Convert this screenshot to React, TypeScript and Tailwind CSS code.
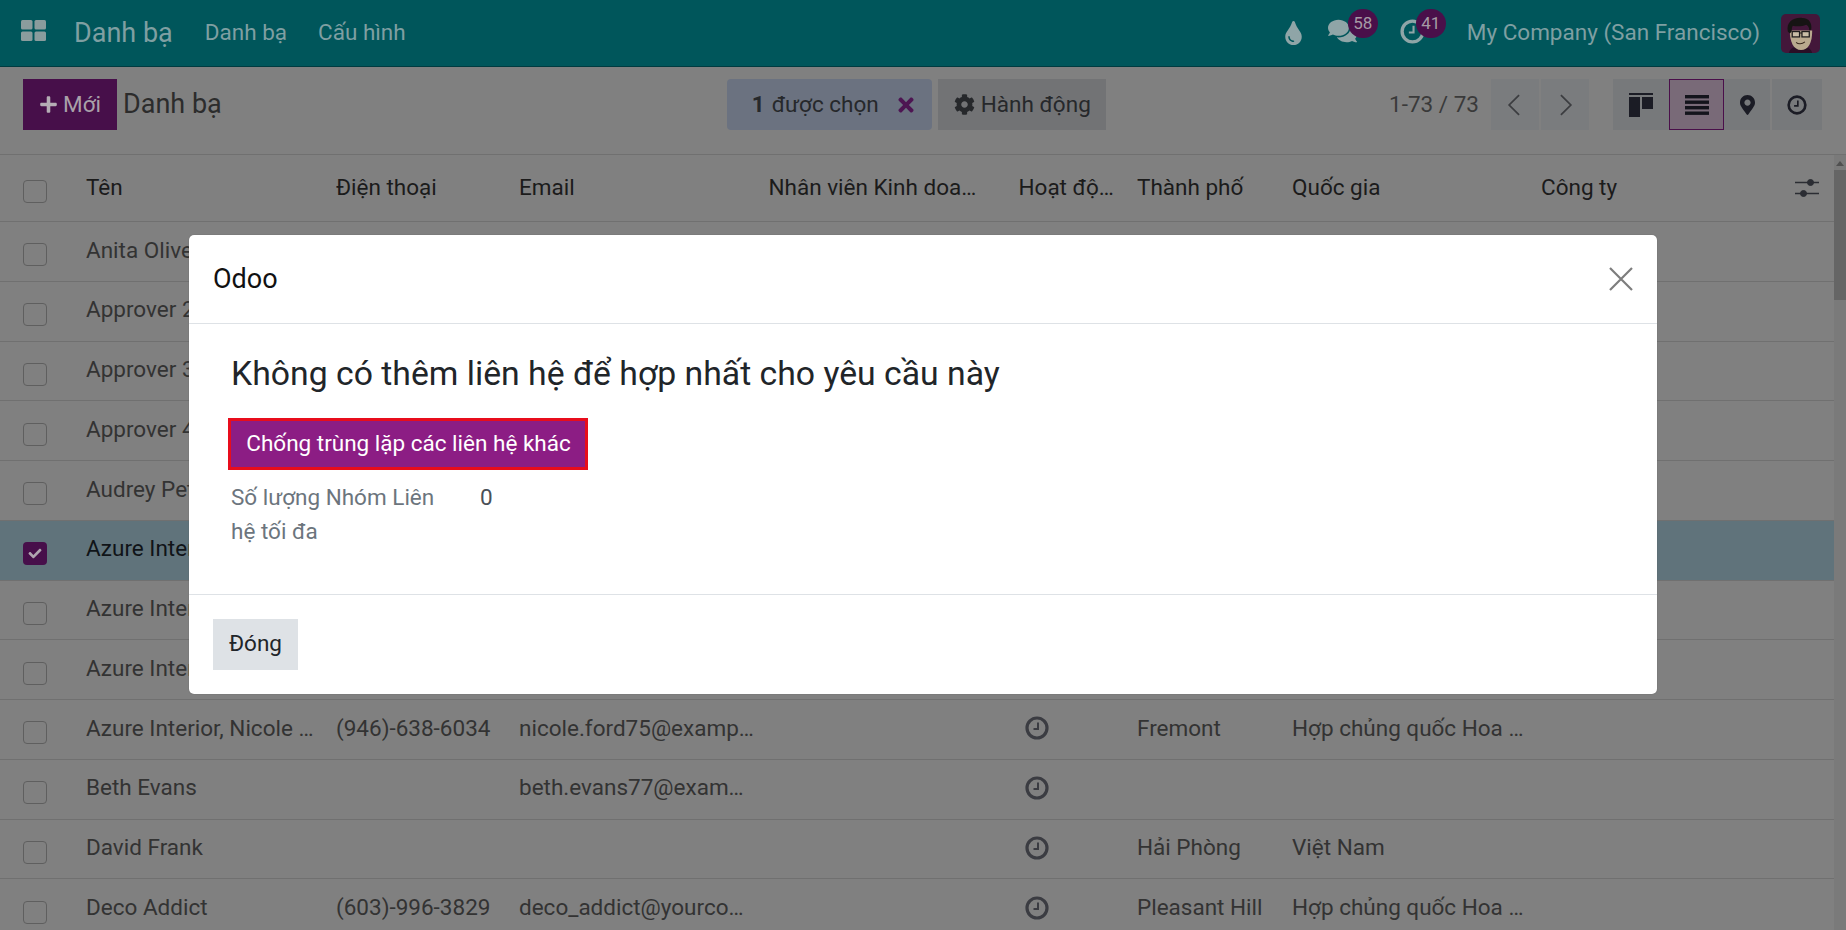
import { FaComments, FaCog, FaMapMarkerAlt, FaPlus, FaTimes, FaTint, FaCheck } from "react-icons/fa";

const gridCols =
  "grid grid-cols-[86px_250px_183px_249.5px_250px_118.5px_155px_249px_1fr]";

type Contact = {
  name: string;
  phone?: string;
  email?: string;
  city?: string;
  country?: string;
  selected?: boolean;
};

const contacts: Contact[] = [
  { name: "Anita Oliver" },
  { name: "Approver 2" },
  { name: "Approver 3" },
  { name: "Approver 4" },
  { name: "Audrey Peterson" },
  { name: "Azure Interior", selected: true },
  { name: "Azure Interior, Brandon Freeman" },
  { name: "Azure Interior, Colleen Diaz" },
  {
    name: "Azure Interior, Nicole Ford",
    phone: "(946)-638-6034",
    email: "nicole.ford75@example.com",
    city: "Fremont",
    country: "Hợp chủng quốc Hoa Kỳ",
  },
  { name: "Beth Evans", email: "beth.evans77@example.com" },
  { name: "David Frank", city: "Hải Phòng", country: "Việt Nam" },
  {
    name: "Deco Addict",
    phone: "(603)-996-3829",
    email: "deco_addict@yourcompany.example.com",
    city: "Pleasant Hill",
    country: "Hợp chủng quốc Hoa Kỳ",
  },
];

function ClockIcon({ className }: { className?: string }) {
  return (
    <svg viewBox="0 0 24 24" className={className} fill="none" stroke="currentColor">
      <circle cx="12" cy="12" r="10" strokeWidth="3.2" />
      <path d="M13 6.5V13H8.5" strokeWidth="2" />
    </svg>
  );
}

function Avatar() {
  return (
    <svg viewBox="0 0 40 40" className="h-[39px] w-[39px] rounded-[5px]">
      <rect width="40" height="40" fill="#43173a" />
      <path d="M8 40c1-5 6-7 12-7s11 2 12 7z" fill="#2a0f26" />
      <path d="M9 17c0 12 4 20 11.5 20S32 30 32 17z" fill="#b9a98e" />
      <path d="M7 18C5 8 13 3 22 4c7 .5 10 5 9 12l-2 1c0-3-1-5-3-6-5 2-10 2-14 1-1 2-1 4-1 6l-2 2z" fill="#161414" />
      <rect x="11.5" y="18" width="7.5" height="5.5" fill="#c9bda6" stroke="#1f1c1c" strokeWidth="1.3" />
      <rect x="21.5" y="18" width="7.5" height="5.5" fill="#c9bda6" stroke="#1f1c1c" strokeWidth="1.3" />
      <path d="M19 19.5h2.5" stroke="#1f1c1c" strokeWidth="1.2" />
      <path d="M15.5 29c2 2 6 2 9-.5" fill="none" stroke="#3a2a20" strokeWidth="1.1" />
    </svg>
  );
}

function Badge({ value, left }: { value: number; left: string }) {
  return (
    <span
      className={`absolute top-[9px] flex h-[29px] w-[30px] items-center justify-center rounded-full bg-[#4a0f4a] text-[17px] leading-none text-[#a59ba5] ${left}`}
    >
      {value}
    </span>
  );
}

function NavBar() {
  return (
    <header className="flex h-[67px] shrink-0 items-center border-b border-[#003b40] bg-[#00565b] text-[22.5px] text-[#7f9fa2]">
      <svg viewBox="0 0 25 21" className="ml-[21px] h-[21px] w-[25px] -translate-y-[3px]" fill="#8a9c9d">
        <rect x="0" y="0" width="11.5" height="9.5" rx="1.5" />
        <rect x="13.5" y="0" width="11.5" height="9.5" rx="1.5" />
        <rect x="0" y="11.5" width="11.5" height="9.5" rx="1.5" />
        <rect x="13.5" y="11.5" width="11.5" height="9.5" rx="1.5" />
      </svg>
      <span className="ml-[28px] text-[27px]">Danh bạ</span>
      <span className="ml-[32px]">Danh bạ</span>
      <span className="ml-[31px]">Cấu hình</span>

      <FaTint className="ml-auto h-[24px] w-[17px] text-[#8fa5a7]" />
      <div className="relative ml-[26px] h-[67px] w-[50px]">
        <FaComments className="absolute left-0 top-[18px] h-[26px] w-[29px] text-[#8fa5a7]" />
        <Badge value={58} left="left-[20px]" />
      </div>
      <div className="relative ml-[22px] h-[67px] w-[46px]">
        <ClockIcon className="absolute left-0 top-[19px] h-[25px] w-[25px] text-[#8fa5a7]" />
        <Badge value={41} left="left-[16px]" />
      </div>
      <span className="ml-[21px]">My Company (San Francisco)</span>
      <div className="ml-[21px] mr-[26px]">
        <Avatar />
      </div>
    </header>
  );
}

function ControlPanel() {
  return (
    <div className="flex h-[88px] shrink-0 items-start border-b border-[#707070] bg-[#808080] pt-[12px] text-[22.5px]">
      <button className="ml-[23px] flex h-[51px] w-[94px] items-center justify-center gap-[5px] bg-[#470f4a] text-[#a9a0a9]">
        <FaPlus className="h-[19px] w-[19px] text-[#b5adb5]" />
        Mới
      </button>
      <span className="ml-[6px] flex h-[51px] items-center text-[27px] text-[#2c2c2c]">Danh bạ</span>

      <div className="ml-[505px] flex h-[51px] w-[205px] items-center rounded-[4px] bg-[#6b7280] pl-[25px] text-[#26282b]">
        <b className="font-bold">1</b>
        <span className="ml-[7px]">được chọn</span>
        <FaTimes className="ml-[17px] h-[22px] w-[20px] text-[#4d1552]" />
      </div>
      <button className="ml-[6px] flex h-[51px] w-[168px] items-center bg-[#727375] pl-[16px] text-[#26282b]">
        <FaCog className="h-[21px] w-[21px]" />
        <span className="ml-[6px]">Hành động</span>
      </button>

      <span className="ml-auto flex h-[51px] items-center text-[#3a3a3a]">1-73 / 73</span>
      <div className="ml-[12px] flex gap-[2px]">
        <PagerButton d="M15.5 3.5 7 12l8.5 8.5" />
        <PagerButton d="M8.5 3.5 17 12l-8.5 8.5" />
      </div>

      <div className="ml-[24px] mr-[24px] flex">
        <button className="flex h-[51px] w-[56px] items-center justify-center bg-[#77797b]">
          <svg viewBox="0 0 24 24" className="h-[24px] w-[24px]" fill="#1b1c25">
            <rect x="0" y="0" width="24" height="2" />
            <rect x="0" y="4" width="11" height="20" />
            <rect x="13" y="4" width="11" height="12" />
          </svg>
        </button>
        <button className="flex h-[51px] w-[55px] items-center justify-center border border-[#4a0f4a] bg-[#796a78]">
          <svg viewBox="0 0 24 20" className="h-[20px] w-[24px]" fill="#14141c">
            <rect y="0" width="24" height="3.4" />
            <rect y="5.5" width="24" height="3.4" />
            <rect y="11" width="24" height="3.4" />
            <rect y="16.5" width="24" height="3.4" />
          </svg>
        </button>
        <button className="flex h-[51px] w-[46px] items-center justify-center bg-[#77797b]">
          <FaMapMarkerAlt className="h-[20px] w-[15px] text-[#1b1c25]" />
        </button>
        <button className="ml-[2px] flex h-[51px] w-[50px] items-center justify-center bg-[#77797b]">
          <ClockIcon className="h-[20px] w-[20px] text-[#1b1c25]" />
        </button>
      </div>
    </div>
  );
}

function PagerButton({ d }: { d: string }) {
  return (
    <button className="flex h-[51px] w-[48px] items-center justify-center bg-[#7a7c7e]">
      <svg viewBox="0 0 24 24" className="h-[28px] w-[28px]" fill="none" stroke="#3c3d40" strokeWidth="1.5">
        <path d={d} />
      </svg>
    </button>
  );
}

function Checkbox({ checked }: { checked?: boolean }) {
  return (
    <span
      className={
        checked
          ? "ml-[23px] mt-[7px] flex h-[23px] w-[24px] items-center justify-center rounded-[4px] bg-[#470f4a]"
          : "ml-[23px] mt-[7px] block h-[23px] w-[24px] rounded-[4px] border border-[#5f5f5f]"
      }
    >
      {checked && <FaCheck className="h-[13px] w-[14px] text-[#b0a5b0]" />}
    </span>
  );
}

function ContactTable() {
  return (
    <div className="flex min-h-0 flex-1 bg-[#808080]">
      <div className="w-[1834px] shrink-0">
        <div className={`${gridCols} h-[67px] items-center border-b border-[#707070] text-[22.5px] text-[#1b1b1b]`}>
          <Checkbox />
          <div className="truncate pr-6">Tên</div>
          <div className="truncate pr-6">Điện thoại</div>
          <div className="truncate pr-6">Email</div>
          <div className="truncate pr-[38px]">Nhân viên Kinh doanh</div>
          <div className="truncate pr-[20px]">Hoạt động</div>
          <div className="truncate pr-6">Thành phố</div>
          <div className="truncate pr-6">Quốc gia</div>
          <div className="flex items-center justify-between pr-[15px]">
            Công ty
            <svg viewBox="0 0 24 18" className="h-[18px] w-[24px]" stroke="#2b2d33" fill="#2b2d33">
              <path d="M0 3.5h24M0 14.5h24" strokeWidth="1.4" />
              <circle cx="15.5" cy="3.5" r="3" />
              <circle cx="8.5" cy="14.5" r="3" />
            </svg>
          </div>
        </div>
        {contacts.map((c, i) => (
          <div
            key={i}
            className={`${gridCols} h-[59.75px] items-center border-b border-[#707070] text-[22.5px] ${
              c.selected ? "bg-[#60737b] text-[#101418]" : "text-[#333333]"
            }`}
          >
            <Checkbox checked={c.selected} />
            <div className="truncate pb-[2px] pr-[14px]">{c.name}</div>
            <div className="truncate pb-[2px] pr-4">{c.phone}</div>
            <div className="truncate pb-[2px] pr-[14px]">{c.email}</div>
            <div />
            <div className="pb-[2px] pl-[6px]">
              <ClockIcon className="h-[24px] w-[24px] text-[#3b3c42]" />
            </div>
            <div className="truncate pb-[2px]">{c.city}</div>
            <div className="truncate pb-[2px] pr-4">{c.country}</div>
            <div />
          </div>
        ))}
      </div>
      <div className="flex w-[12px] flex-col items-center bg-[#7a7a7a]">
        <span className="mt-[6px] h-0 w-0 border-x-[4px] border-b-[5px] border-x-transparent border-b-[#505050]" />
        <span className="mt-[4px] h-[130px] w-full bg-[#656565]" />
      </div>
    </div>
  );
}

function MergeDialog() {
  return (
    <div className="absolute inset-0 flex justify-center pt-[235px]">
      <div className="flex h-[459px] w-[1468px] flex-col rounded-[5px] bg-white text-[22.5px] shadow-[0_0_1px_#555]">
        <div className="flex h-[89px] items-center justify-between border-b border-[#dee2e6] pl-[24px] pr-[24px]">
          <span className="text-[27px] text-[#111]">Odoo</span>
          <svg viewBox="0 0 24 24" className="h-[24px] w-[24px]" stroke="#7d7d7d" strokeWidth="2.2">
            <path d="M1 1l22 22M23 1 1 23" />
          </svg>
        </div>
        <div className="flex-1 pl-[39px] pt-[28px]">
          <h1 className="pl-[3px] text-[33.75px] leading-[44px] text-[#212529]">
            Không có thêm liên hệ để hợp nhất cho yêu cầu này
          </h1>
          <button className="mt-[22px] h-[52px] w-[360px] border-[3px] border-[#e80d1c] bg-[#8c1d84] pl-[1px] text-center text-white">
            Chống trùng lặp các liên hệ khác
          </button>
          <div className="mt-[10px] flex pl-[3px] leading-[34px]">
            <div className="w-[249px] text-[#6c757d]">
              Số lượng Nhóm Liên
              <br />
              hệ tối đa
            </div>
            <div className="text-[#495057]">0</div>
          </div>
        </div>
        <div className="flex h-[100px] items-start border-t border-[#dee2e6] pl-[24px] pt-[24px]">
          <button className="h-[51px] w-[85px] bg-[#dee2e6] pb-[1px] text-[#212529]">Đóng</button>
        </div>
      </div>
    </div>
  );
}

export default function App() {
  return (
    <div className="relative flex h-[930px] w-full flex-col overflow-hidden font-['Roboto',sans-serif]">
      <NavBar />
      <ControlPanel />
      <ContactTable />
      <MergeDialog />
    </div>
  );
}
